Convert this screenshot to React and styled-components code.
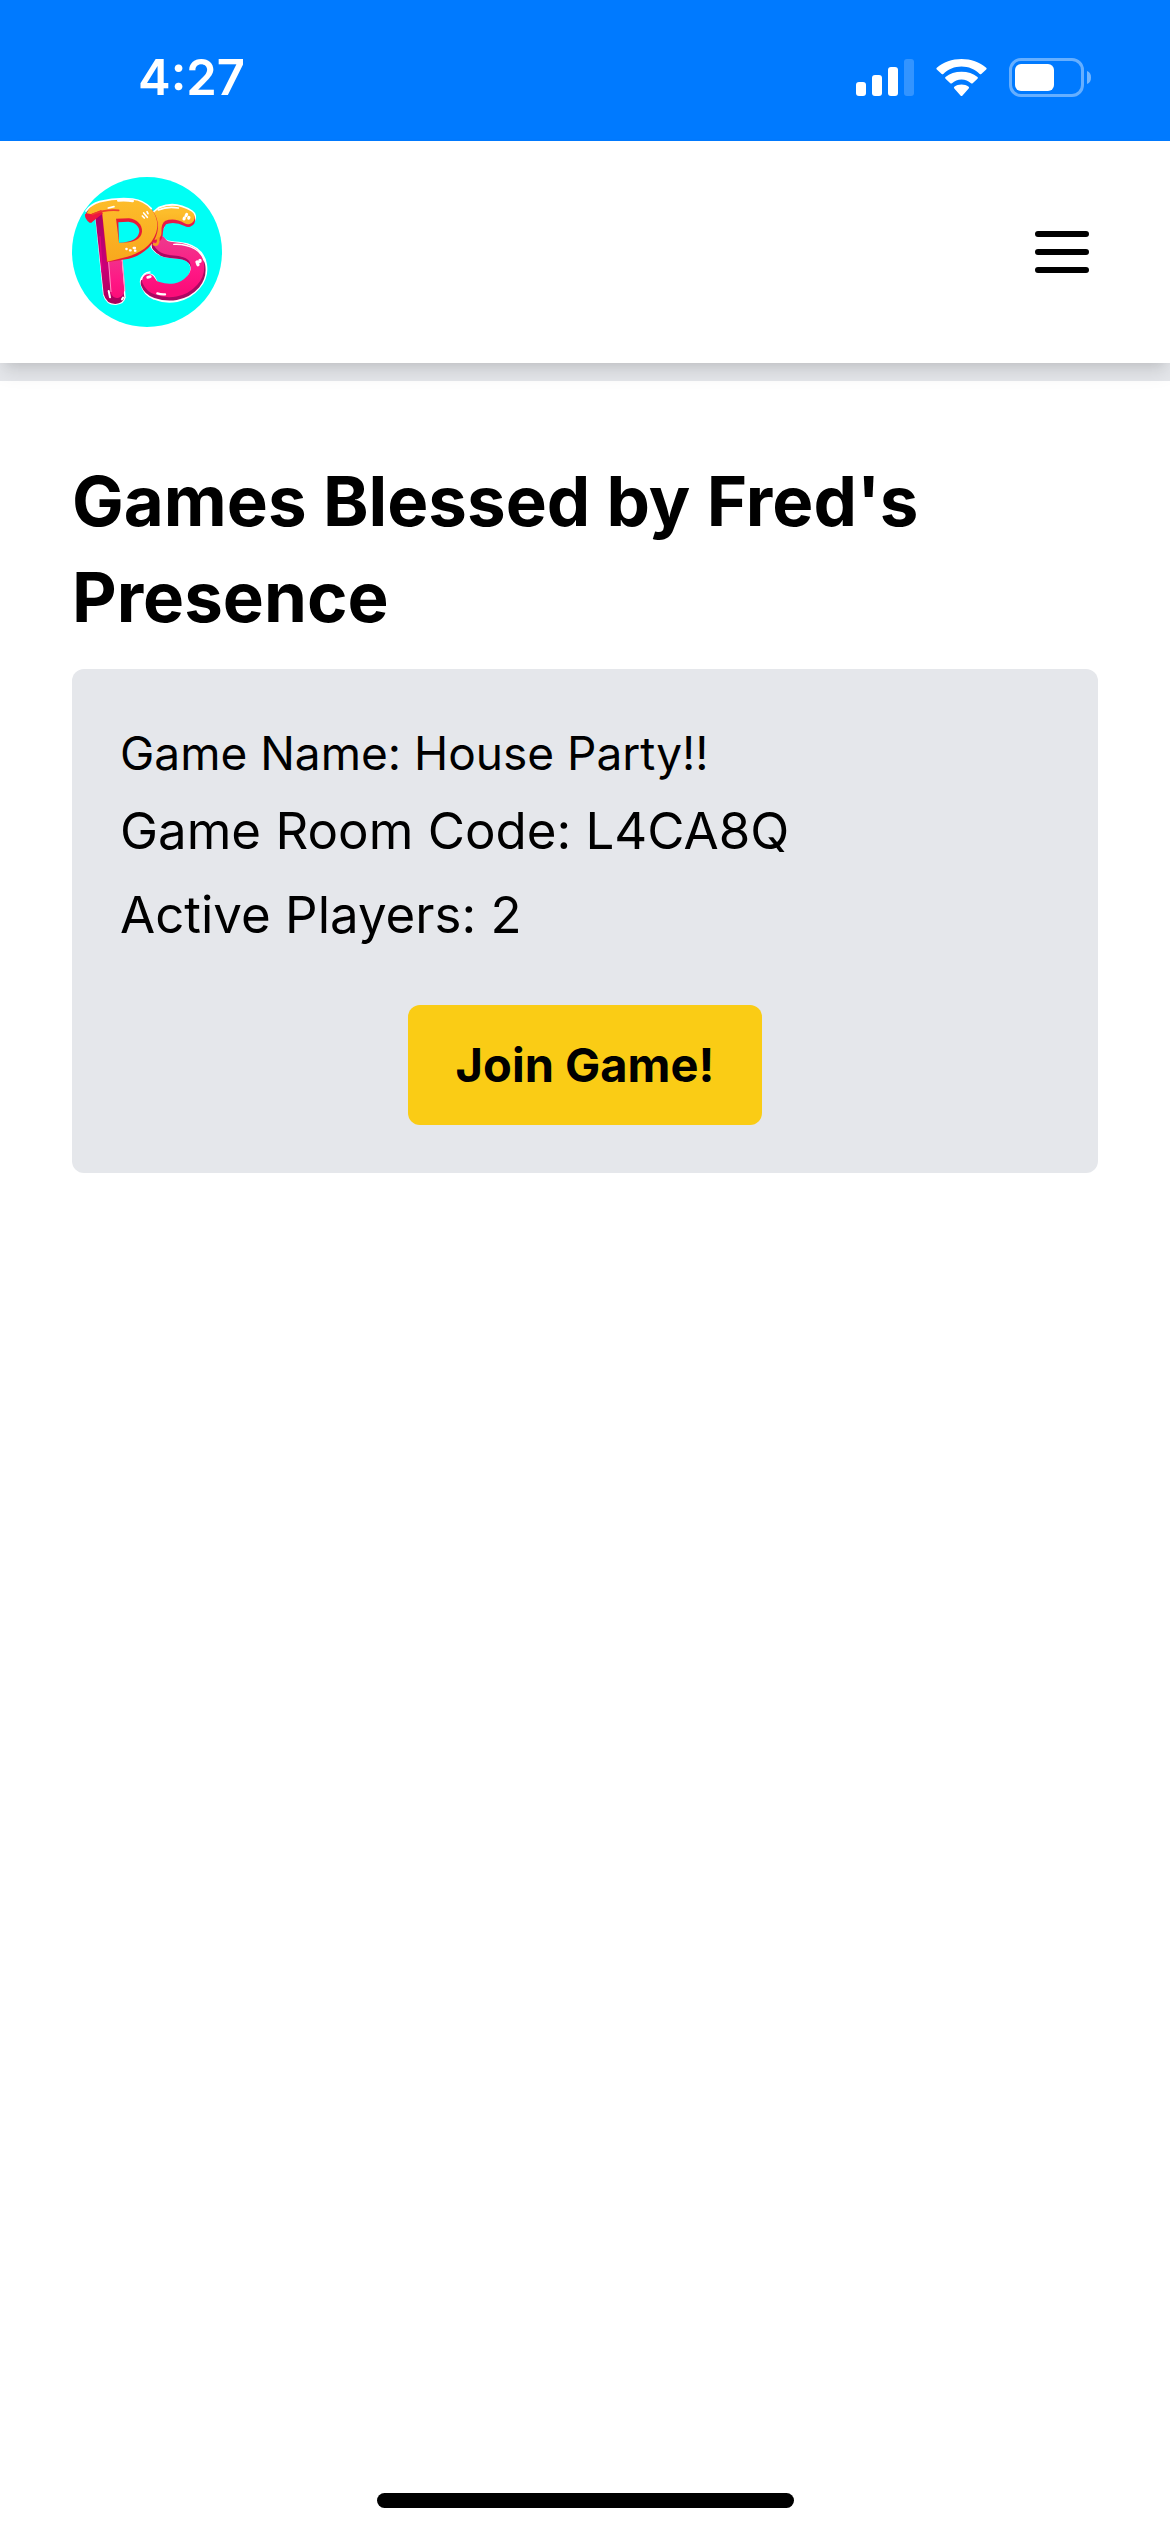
import React from 'react';
import styled, { createGlobalStyle } from 'styled-components';

const GlobalStyle = createGlobalStyle`
  body {
    margin: 0;
    background-color: #fff;
    color: #000;
    font-family: Inter, 'Liberation Sans', sans-serif;
  }
`;

const Page = styled.div`
  min-height: 100vh;
  display: flex;
  flex-direction: column;
`;

const StatusBar = styled.div`
  height: 141px;
  padding: 0 78px 0 138px;
  box-sizing: border-box;
  display: flex;
  align-items: center;
  justify-content: space-between;
  background-color: #007aff;
  color: #fff;
`;

const Time = styled.time`
  font-size: 49px;
  line-height: 60px;
  font-weight: 600;
  padding-top: 15px;
`;

const StatusIcons = styled.div`
  display: flex;
  align-items: center;
  gap: 22px;
  padding-top: 14px;
`;

const Header = styled.header`
  position: relative;
  z-index: 1;
  padding: 36px 72px;
  display: flex;
  align-items: center;
  justify-content: space-between;
  background-color: #fff;
  box-shadow: 0 12px 18px -3px rgba(0, 0, 0, 0.1), 0 6px 12px -6px rgba(0, 0, 0, 0.1);
`;

const LogoLink = styled.a`
  display: flex;
`;

const MenuButton = styled.button`
  display: flex;
  padding: 0;
  border: none;
  background: none;
  color: inherit;
  cursor: pointer;
`;

const Divider = styled.div`
  height: 18px;
  background-color: #e5e7eb;
`;

const Main = styled.main`
  flex: 1;
  padding: 72px;
`;

const Title = styled.h1`
  margin: 0 0 24px;
  font-size: 69px;
  line-height: 96px;
  font-weight: 700;
`;

const GameCard = styled.section`
  padding: 48px;
  border-radius: 12px;
  background-color: #e5e7eb;
`;

const GameName = styled.h2`
  margin: 0;
  font-size: 46px;
  line-height: 72px;
  font-weight: 400;
`;

const GameDetail = styled.p`
  margin: 0;
  font-size: 51px;
  line-height: 84px;
`;

const CardActions = styled.div`
  display: flex;
  justify-content: center;
  margin-top: 48px;
`;

const JoinButton = styled.button`
  padding: 24px 48px;
  border: none;
  border-radius: 12px;
  background-color: #facc15;
  color: #000;
  font-family: inherit;
  font-size: 47px;
  line-height: 72px;
  font-weight: 700;
  cursor: pointer;
`;

const HomeIndicator = styled.div`
  position: fixed;
  left: 50%;
  bottom: 24px;
  width: 417px;
  height: 15px;
  margin-left: -208px;
  border-radius: 8px;
  background-color: #000;
`;

const SignalIcon = () => (
  <svg width="58" height="38" viewBox="0 0 58 38" fill="#fff" aria-hidden="true">
    <rect x="0" y="23" width="10" height="14" rx="3" />
    <rect x="16" y="16" width="10" height="21" rx="3" />
    <rect x="32" y="8" width="10" height="29" rx="3" />
    <rect x="48" y="0" width="10" height="37" rx="3" opacity="0.2" />
  </svg>
);

const WifiIcon = () => (
  <svg width="51" height="38" viewBox="0 0 51 38" fill="#fff" aria-hidden="true">
    <path d="M25.5 7.5c7 0 13.4 2.7 18.2 7.4q.8.8 1.6 0l4.9-4.5q.9-.9 0-1.7C43.6 3.2 34.9 0 25.5 0S7.400 3.200.8 8.700q-.9.8 0 1.700l4.900 4.500q.8.8 1.600 0C12.100 10.200 18.500 7.500 25.500 7.500z" />
    <path d="M25.5 20.500c3.700 0 7 1.400 9.500 3.700q.9.8 1.700 0l4.800-4.500q.9-.9 0-1.700C37.300 14.700 31.700 12.800 25.500 12.800S13.700 14.700 9.500 18q-.9.8 0 1.700l4.800 4.500q.8.8 1.700 0c2.500-2.300 5.800-3.700 9.500-3.700z" />
    <path d="M32.700 27.800q.8.800 0 1.600l-6.400 7.300q-.8.800-1.600 0l-6.400-7.300q-.8-.8 0-1.600c2-1.500 4.500-2.300 7.200-2.300s5.200.8 7.200 2.300z" />
  </svg>
);

const BatteryIcon = () => (
  <svg width="83" height="40" viewBox="0 0 83 40" fill="#fff" aria-hidden="true">
    <rect x="1.5" y="1.5" width="72" height="36" rx="10.5" fill="none" stroke="#fff" strokeWidth="3" opacity="0.4" />
    <rect x="6" y="6" width="39" height="27" rx="6" />
    <path d="M78 13c3 1 4 3.500 4 6.500s-1 5.500-4 6.500z" opacity="0.45" />
  </svg>
);

const MenuIcon = () => (
  <svg width="72" height="72" viewBox="0 0 24 24" fill="none" stroke="currentColor" strokeWidth="2" strokeLinecap="round" aria-hidden="true">
    <path d="M4 6h16M4 12h16M4 18h16" />
  </svg>
);

const Logo = () => (
  <svg width="150" height="150" viewBox="36 36 450 450" fill="none" strokeLinecap="round" strokeLinejoin="round" aria-hidden="true">
    <defs>
      <linearGradient id="gold" x1="0" y1="0" x2="0" y2="1">
        <stop offset="0" stopColor="#fdbd2b" />
        <stop offset="1" stopColor="#f8a81d" />
      </linearGradient>
      <linearGradient id="pink" x1="0" y1="0" x2="0" y2="1">
        <stop offset="0" stopColor="#f0358b" />
        <stop offset="0.6" stopColor="#ff1785" />
        <stop offset="1" stopColor="#fb0d79" />
      </linearGradient>
      <linearGradient id="plum" x1="0" y1="0" x2="0" y2="1">
        <stop offset="0" stopColor="#a8006b" />
        <stop offset="0.6" stopColor="#c90077" />
        <stop offset="1" stopColor="#a8005a" />
      </linearGradient>
    </defs>
    <circle cx="261" cy="261" r="225" fill="#00fff5" />

    {/* lower balloon tube */}
    <path d="M296 237C315 262 345 250 375 259C425 274 425 325 400 354C370 390 325 394 290 380Q271 373 265 350" stroke="#fff" strokeWidth="51" />
    <path d="M297 241C315 264 345 254 375 263C422 277 423 325 400 354C370 388 325 390 290 378Q270 371 264 354" stroke="#aa0862" strokeWidth="44" />
    <path d="M299 232C315 258 345 247 373 257C421 270 421 320 396 347C368 379 325 382 292 370Q274 365 266 347" stroke="url(#pink)" strokeWidth="40" />
    {/* upper balloon tube */}
    <path d="M290 180Q290 158 307 147Q345 131 384 157" stroke="#fff" strokeWidth="49" />
    <path d="M286 211Q286 176 307 158Q345 143 384 164" stroke="#e6194b" strokeWidth="44" />
    <path d="M284 204Q281 164 307 149Q345 134 384 157" stroke="url(#gold)" strokeWidth="41" />
    <path d="M295 135Q322 123 355 129" stroke="#fff" strokeWidth="5" />
    <path d="M372 162l1-3M378 152l2-4M386 160l1-3" stroke="#fff" strokeWidth="9" />

    {/* upright post */}
    <path d="M104 143L129 390Q138 421 168 420Q194 417 197 397L187 280L140 140z" fill="#fff" />
    <path d="M105 146L131 388Q139 417 166 417Q190 415 193 397L175 280L138 142z" fill="url(#plum)" />
    <path d="M144 280L152 382Q158 402 176 398Q191 393 193 377L184 270z" fill="url(#pink)" />
    <path d="M187 286L195 376M146 292L153 380" stroke="#ff8fc4" strokeWidth="3" />
    <path d="M120 215L126 320" stroke="#e0007f" strokeWidth="4" />
    <path d="M146 378L150 397M189 398l-3 5" stroke="#fff" strokeWidth="6" />

    {/* golden loop */}
    <path d="M75 151Q88 117 119 111C154 101 187 100 218 103C264 108 295 147 294 187C291 235 253 269 207 281L140 292L126 145L93 174z" fill="#e51b38" />
    <path d="M80 145Q91 119 119 111C154 101 187 100 218 103C264 108 295 147 292 187C286 232 249 263 202 275L142 290L126 138L95 148z" fill="url(#gold)" />
    <path d="M76 147Q71 160 90 174L128 146L124 135L94 147z" fill="#ef1740" />
    <path d="M168 161L207 160C231 162 247 180 246 200C243 224 221 233 177 233z" fill="#e51b38" />
    <path d="M175 172L205 170C226 172 238 184 238 200C234 222 214 231 177 233z" fill="#00fff5" />
    <path d="M78 138Q93 117 119 110C154 101 187 99 218 102Q252 106 274 131" stroke="#fff" strokeWidth="5" />
    <path d="M175 106Q200 104 218 108" stroke="#fff" strokeWidth="8" />
    <path d="M97 148Q138 132 176 136" stroke="#ef3f2b" strokeWidth="5" />
    <path d="M145 129L162 125" stroke="#fff" strokeWidth="5" />
    <path d="M247 153l6 6M251 144l11 13M261 140l3 6" stroke="#fff" strokeWidth="5" />
    <path d="M199 252h1M210 256h2M221 249h4M225 257h1" stroke="#fff" strokeWidth="7" />
    <path d="M282 238Q296 243 295 220" stroke="#f59a20" strokeWidth="8" />

    {/* highlights */}
    <path d="M411 291l3 8M420 286v3" stroke="#fff" strokeWidth="10" />
    <path d="M263 337l8-2" stroke="#fff" strokeWidth="8" />
    <path d="M292 385Q303 389 315 388" stroke="#fff" strokeWidth="7" />
    <path d="M245 343Q249 322 270 321M341 238Q377 236 405 252Q426 264 433 288" stroke="#fff" strokeWidth="4" />
  </svg>
);

const game = {
  name: 'House Party!!',
  roomCode: 'L4CA8Q',
  activePlayers: 2,
};

export default function App() {
  return (
    <Page>
      <GlobalStyle />
      <StatusBar>
        <Time>4:27</Time>
        <StatusIcons>
          <SignalIcon />
          <WifiIcon />
          <BatteryIcon />
        </StatusIcons>
      </StatusBar>
      <Header>
        <LogoLink href="#" aria-label="Home">
          <Logo />
        </LogoLink>
        <MenuButton type="button" aria-label="Open menu">
          <MenuIcon />
        </MenuButton>
      </Header>
      <Divider />
      <Main>
        <Title>Games Blessed by Fred&apos;s Presence</Title>
        <GameCard>
          <GameName>Game Name: {game.name}</GameName>
          <GameDetail>Game Room Code: {game.roomCode}</GameDetail>
          <GameDetail>Active Players: {game.activePlayers}</GameDetail>
          <CardActions>
            <JoinButton type="button">Join Game!</JoinButton>
          </CardActions>
        </GameCard>
      </Main>
      <HomeIndicator />
    </Page>
  );
}
